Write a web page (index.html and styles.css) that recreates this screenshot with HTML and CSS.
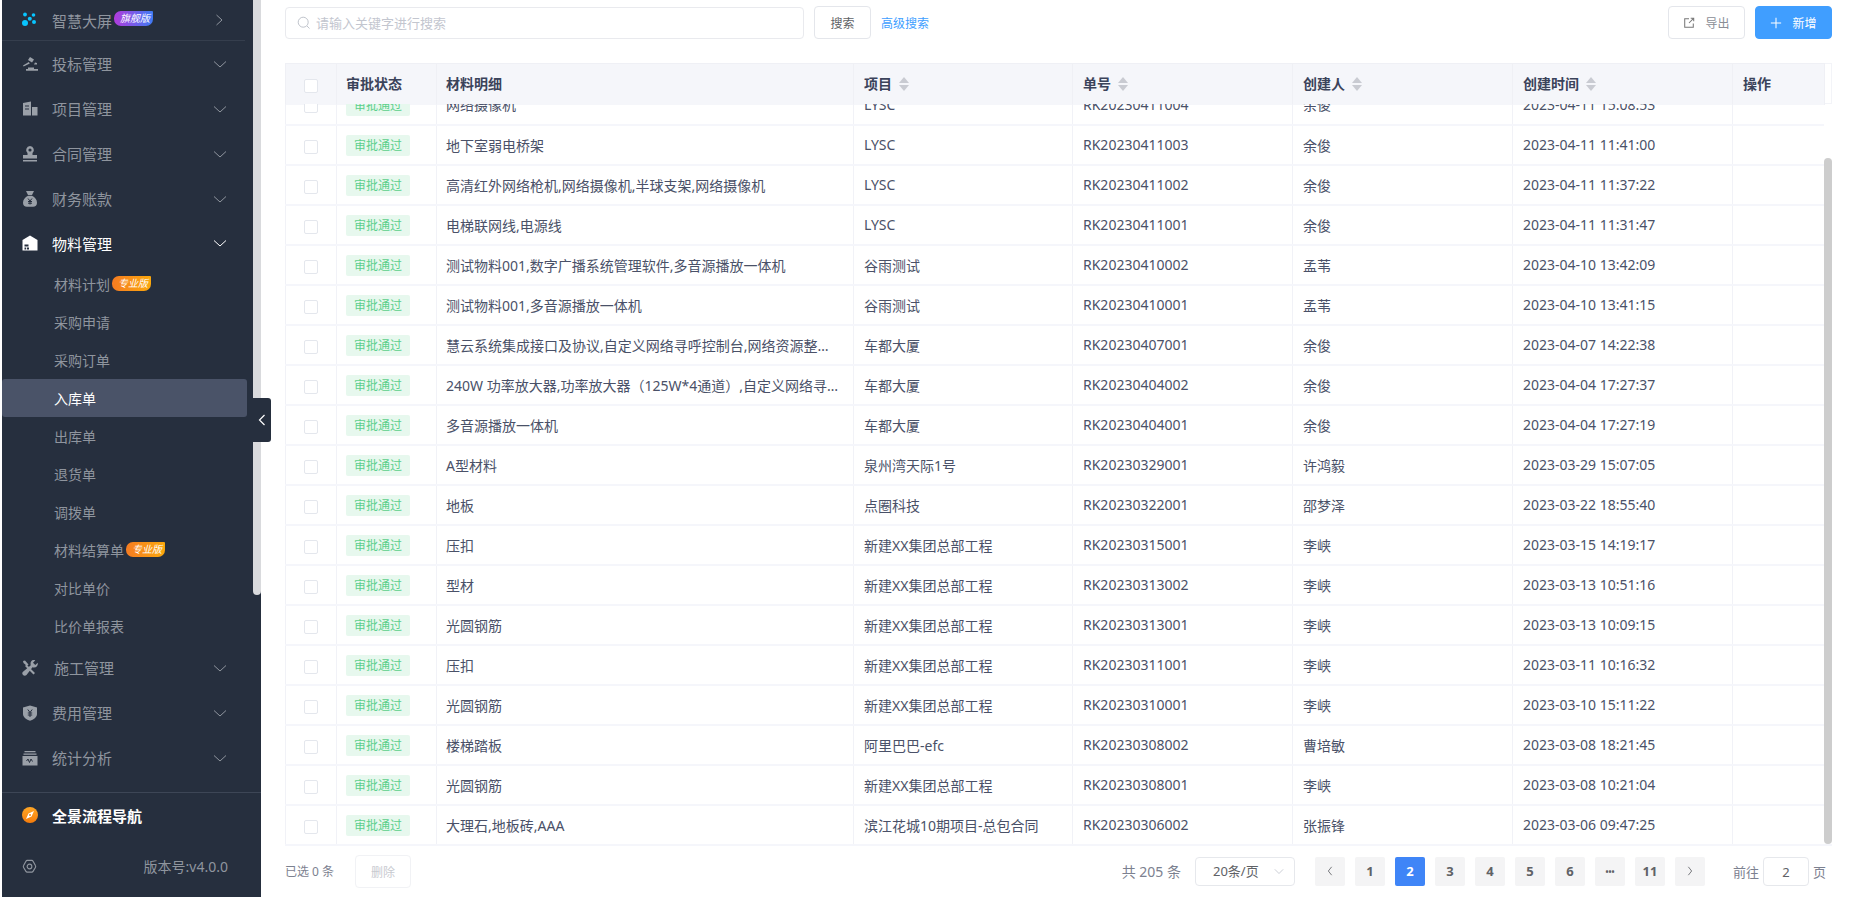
FILE: index.html
```html
<!DOCTYPE html>
<html lang="zh-CN">
<head>
<meta charset="utf-8">
<title>入库单</title>
<link rel="stylesheet" href="styles.css">
</head>
<body>
<div class="app">
  <aside class="sidebar">
    <div class="side-scroll">
      <nav class="menu">
        <div class="menu-item first">
          <svg class="ico" viewBox="0 0 16 16"><circle cx="3" cy="11" r="3" fill="#08c5ff"/><circle cx="3" cy="2.500" r="1.900" fill="#08c5ff"/><circle cx="7.800" cy="6.800" r="2" fill="#08c5ff"/><circle cx="11.500" cy="3" r="1.800" fill="#08c5ff"/><circle cx="12" cy="10" r="2" fill="#08c5ff"/></svg>
          <span>智慧大屏</span><em class="badge flagship">旗舰版</em>
          <svg class="chev" viewBox="0 0 12 12"><path d="M3.500 1 9 6 3.500 11"/></svg>
        </div>
        <div class="menu-item">
          <svg class="ico" viewBox="0 0 16 16"><path d="M8 1l4 2.500-2 3-4-2.500zM6.800 6 1 9.500l.6 1L7.800 7.500zM6 11.500h6V13H16v1.800H4V13h2zM13 6.500l2 .5v1.500h-3z" fill="#9aa0a8"/></svg>
          <span>投标管理</span>
          <svg class="chev" viewBox="0 0 12 12"><path d="M0 3.500 6 9l6-5.500"/></svg>
        </div>
        <div class="menu-item">
          <svg class="ico" viewBox="0 0 16 16"><path d="M1 2l8-1.500v14H1zM10 6h5.500v8.500H10z" fill="#9aa0a8"/><path d="M3 5h4M3 8h4" stroke="#262f3e" stroke-width="1"/></svg>
          <span>项目管理</span>
          <svg class="chev" viewBox="0 0 12 12"><path d="M0 3.500 6 9l6-5.500"/></svg>
        </div>
        <div class="menu-item">
          <svg class="ico" viewBox="0 0 16 16"><path d="M8 0a4 4 0 0 1 2.500 7v2H15v3.500H1V9h4.500V7A4 4 0 0 1 8 0zM1 14h14v1.500H1z" fill="#9aa0a8"/><circle cx="8" cy="4" r="1.600" fill="#262f3e"/></svg>
          <span>合同管理</span>
          <svg class="chev" viewBox="0 0 12 12"><path d="M0 3.500 6 9l6-5.500"/></svg>
        </div>
        <div class="menu-item">
          <svg class="ico" viewBox="0 0 16 16"><path d="M4 0h8l-2 4H6zM6 4.800h4c3 1.500 5 4 5 7 0 2.500-1.500 4-4 4H5c-2.500 0-4-1.500-4-4 0-3 2-5.500 5-7z" fill="#9aa0a8"/><path d="M6 7.500 8 10l2-2.500M8 10v3.500M6 10.500h4M6 12.200h4" stroke="#262f3e" fill="none"/></svg>
          <span>财务账款</span>
          <svg class="chev" viewBox="0 0 12 12"><path d="M0 3.500 6 9l6-5.500"/></svg>
        </div>
        <div class="menu-item open">
          <svg class="ico" viewBox="0 0 16 16"><path d="M8 .5 15.500 5v10.500H.5V5z" fill="#fff"/><path d="M2.500 9.500h4v2h-4zM2.500 12.500h1.700v2H2.500zM5 12.500h2v2H5z" fill="#262f3e"/></svg>
          <span>物料管理</span>
          <svg class="chev" viewBox="0 0 12 12"><path d="M0 3.500 6 9l6-5.500"/></svg>
        </div>
        <div class="sub-item"><span>材料计划</span><em class="badge pro">专业版</em></div>
        <div class="sub-item"><span>采购申请</span></div>
        <div class="sub-item"><span>采购订单</span></div>
        <div class="sub-item active"><span>入库单</span></div>
        <div class="sub-item"><span>出库单</span></div>
        <div class="sub-item"><span>退货单</span></div>
        <div class="sub-item"><span>调拨单</span></div>
        <div class="sub-item"><span>材料结算单</span><em class="badge pro">专业版</em></div>
        <div class="sub-item"><span>对比单价</span></div>
        <div class="sub-item"><span>比价单报表</span></div>
        <div class="menu-item wide">
          <svg class="ico" viewBox="0 0 16 16"><path d="M1 1 3 .5 6.500 4.500 5 6 1.500 3zM4.500 4.500l8.500 8.500-1.500 1.500L3 6z" fill="#9aa0a8"/><path d="M11.500 0c.8 0 1.300.1 1.800.3L11 2.700 13.300 5l2.400-2.300c.5 2-.5 4.800-3.700 4.800-.6 0-1 0-1.500-.2L4.500 15c-1 1-2.500 1-3.500 0s-1-2.300 0-3.300l7.800-6.500C8 3 9 0 11.500 0z" fill="#9aa0a8"/></svg>
          <span>施工管理</span>
          <svg class="chev" viewBox="0 0 12 12"><path d="M0 3.500 6 9l6-5.500"/></svg>
        </div>
        <div class="menu-item">
          <svg class="ico" viewBox="0 0 16 16"><path d="M8 .5 15 2.500V9c0 3.500-3.500 5.500-7 6.800C4.500 14.500 1 12.500 1 9V2.500z" fill="#9aa0a8"/><path d="M5.800 4.500 8 7.500l2.200-3M8 7.500V12M5.800 8h4.400M5.800 10h4.400" stroke="#262f3e" fill="none"/></svg>
          <span>费用管理</span>
          <svg class="chev" viewBox="0 0 12 12"><path d="M0 3.500 6 9l6-5.500"/></svg>
        </div>
        <div class="menu-item">
          <svg class="ico" viewBox="0 0 16 16"><path d="M2.500 1h11v1.300h-11zM1.500 3.500h13v1.300h-13zM.5 6h15v9.500H.5z" fill="#9aa0a8"/><path d="M4.500 11 6 9l1.500 3.500L9 9l1.500 2.500" stroke="#262f3e" fill="none"/></svg>
          <span>统计分析</span>
          <svg class="chev" viewBox="0 0 12 12"><path d="M0 3.500 6 9l6-5.500"/></svg>
        </div>
      </nav>
      <div class="side-bar-track"><div class="side-bar-thumb"></div></div>
    </div>
    <div class="side-nav-row">
      <svg class="ico" viewBox="0 0 16 16"><defs><linearGradient id="og" x1="0" y1="0" x2="0" y2="1"><stop offset="0" stop-color="#ffa726"/><stop offset="1" stop-color="#f57c0c"/></linearGradient></defs><circle cx="8" cy="8" r="8" fill="url(#og)"/><path d="M12 4 9.500 9.500 4 12l2.500-5.500z" fill="#fff"/><circle cx="8" cy="8" r="1" fill="#f58a12"/></svg>
      <span>全景流程导航</span>
    </div>
    <div class="side-foot">
      <svg class="gear" viewBox="0 0 16 16"><path d="M5.500 1.500h5a1.500 1.500 0 0 1 1.300.8l2.500 4.700a2 2 0 0 1 0 2l-2.500 4.200a1.500 1.500 0 0 1-1.300.8h-5a1.500 1.500 0 0 1-1.300-.8L1.700 9a2 2 0 0 1 0-2l2.500-4.700a1.500 1.500 0 0 1 1.300-.8z"/><circle cx="8" cy="8" r="2.500"/></svg>
      <span>版本号:v4.0.0</span>
    </div>
  </aside>
  <div class="collapse-handle"><svg viewBox="0 0 8 12"><path d="M6.500 1 1.500 6l5 5"/></svg></div>

  <main class="main">
    <div class="toolbar">
      <div class="search-box">
        <svg viewBox="0 0 14 14"><circle cx="6.200" cy="6.200" r="5"/><path d="M10 10l2.500 2.500"/></svg>
        <span>请输入关键字进行搜索</span>
      </div>
      <button class="btn btn-search">搜索</button>
      <a class="adv-link">高级搜索</a>
      <div class="toolbar-right">
        <button class="btn btn-tool">
          <svg viewBox="0 0 14 14"><path d="M7 2H2v10h10V7.500M9 1.500h3.500V5M12.300 1.700 7 7"/></svg>导出
        </button>
        <button class="btn btn-primary">
          <svg viewBox="0 0 14 14"><path d="M7 1v12M1 7h12"/></svg>新增
        </button>
      </div>
    </div>

    <div class="table-wrap">
      <div class="table-head-row">
        <table class="grid head">
          <colgroup><col class="c1"><col class="c2"><col class="c3"><col class="c4"><col class="c5"><col class="c5"><col class="c5"><col class="c8"></colgroup>
          <thead>
            <tr>
              <th><i class="check"></i></th>
              <th class="tight">审批状态</th>
              <th class="tight">材料明细</th>
              <th>项目<i class="sort"></i></th>
              <th>单号<i class="sort"></i></th>
              <th>创建人<i class="sort"></i></th>
              <th>创建时间<i class="sort"></i></th>
              <th>操作</th>
            </tr>
          </thead>
        </table>
        <div class="gutter"></div>
      </div>
      <div class="table-body-row">
        <div class="table-clip">
          <table class="grid body">
            <colgroup><col class="c1"><col class="c2"><col class="c3"><col class="c4"><col class="c5"><col class="c5"><col class="c5"><col class="c8"></colgroup>
            <tbody>
              <tr><td><i class="check"></i></td><td class="tight"><b class="tag">审批通过</b></td><td class="tight">网络摄像机</td><td>LYSC</td><td>RK20230411004</td><td>余俊</td><td>2023-04-11 15:08:53</td><td></td></tr>
              <tr><td><i class="check"></i></td><td class="tight"><b class="tag">审批通过</b></td><td class="tight">地下室弱电桥架</td><td>LYSC</td><td>RK20230411003</td><td>余俊</td><td>2023-04-11 11:41:00</td><td></td></tr>
              <tr><td><i class="check"></i></td><td class="tight"><b class="tag">审批通过</b></td><td class="tight">高清红外网络枪机,网络摄像机,半球支架,网络摄像机</td><td>LYSC</td><td>RK20230411002</td><td>余俊</td><td>2023-04-11 11:37:22</td><td></td></tr>
              <tr><td><i class="check"></i></td><td class="tight"><b class="tag">审批通过</b></td><td class="tight">电梯联网线,电源线</td><td>LYSC</td><td>RK20230411001</td><td>余俊</td><td>2023-04-11 11:31:47</td><td></td></tr>
              <tr><td><i class="check"></i></td><td class="tight"><b class="tag">审批通过</b></td><td class="tight">测试物料001,数字广播系统管理软件,多音源播放一体机</td><td>谷雨测试</td><td>RK20230410002</td><td>孟苇</td><td>2023-04-10 13:42:09</td><td></td></tr>
              <tr><td><i class="check"></i></td><td class="tight"><b class="tag">审批通过</b></td><td class="tight">测试物料001,多音源播放一体机</td><td>谷雨测试</td><td>RK20230410001</td><td>孟苇</td><td>2023-04-10 13:41:15</td><td></td></tr>
              <tr><td><i class="check"></i></td><td class="tight"><b class="tag">审批通过</b></td><td class="tight">慧云系统集成接口及协议,自定义网络寻呼控制台,网络资源整合模块,多音源</td><td>车都大厦</td><td>RK20230407001</td><td>余俊</td><td>2023-04-07 14:22:38</td><td></td></tr>
              <tr><td><i class="check"></i></td><td class="tight"><b class="tag">审批通过</b></td><td class="tight">240W 功率放大器,功率放大器（125W*4通道）,自定义网络寻呼控制台,多音源</td><td>车都大厦</td><td>RK20230404002</td><td>余俊</td><td>2023-04-04 17:27:37</td><td></td></tr>
              <tr><td><i class="check"></i></td><td class="tight"><b class="tag">审批通过</b></td><td class="tight">多音源播放一体机</td><td>车都大厦</td><td>RK20230404001</td><td>余俊</td><td>2023-04-04 17:27:19</td><td></td></tr>
              <tr><td><i class="check"></i></td><td class="tight"><b class="tag">审批通过</b></td><td class="tight">A型材料</td><td>泉州湾天际1号</td><td>RK20230329001</td><td>许鸿毅</td><td>2023-03-29 15:07:05</td><td></td></tr>
              <tr><td><i class="check"></i></td><td class="tight"><b class="tag">审批通过</b></td><td class="tight">地板</td><td>点圈科技</td><td>RK20230322001</td><td>邵梦泽</td><td>2023-03-22 18:55:40</td><td></td></tr>
              <tr><td><i class="check"></i></td><td class="tight"><b class="tag">审批通过</b></td><td class="tight">压扣</td><td>新建XX集团总部工程</td><td>RK20230315001</td><td>李峡</td><td>2023-03-15 14:19:17</td><td></td></tr>
              <tr><td><i class="check"></i></td><td class="tight"><b class="tag">审批通过</b></td><td class="tight">型材</td><td>新建XX集团总部工程</td><td>RK20230313002</td><td>李峡</td><td>2023-03-13 10:51:16</td><td></td></tr>
              <tr><td><i class="check"></i></td><td class="tight"><b class="tag">审批通过</b></td><td class="tight">光圆钢筋</td><td>新建XX集团总部工程</td><td>RK20230313001</td><td>李峡</td><td>2023-03-13 10:09:15</td><td></td></tr>
              <tr><td><i class="check"></i></td><td class="tight"><b class="tag">审批通过</b></td><td class="tight">压扣</td><td>新建XX集团总部工程</td><td>RK20230311001</td><td>李峡</td><td>2023-03-11 10:16:32</td><td></td></tr>
              <tr><td><i class="check"></i></td><td class="tight"><b class="tag">审批通过</b></td><td class="tight">光圆钢筋</td><td>新建XX集团总部工程</td><td>RK20230310001</td><td>李峡</td><td>2023-03-10 15:11:22</td><td></td></tr>
              <tr><td><i class="check"></i></td><td class="tight"><b class="tag">审批通过</b></td><td class="tight">楼梯踏板</td><td>阿里巴巴-efc</td><td>RK20230308002</td><td>曹培敏</td><td>2023-03-08 18:21:45</td><td></td></tr>
              <tr><td><i class="check"></i></td><td class="tight"><b class="tag">审批通过</b></td><td class="tight">光圆钢筋</td><td>新建XX集团总部工程</td><td>RK20230308001</td><td>李峡</td><td>2023-03-08 10:21:04</td><td></td></tr>
              <tr><td><i class="check"></i></td><td class="tight"><b class="tag">审批通过</b></td><td class="tight">大理石,地板砖,AAA</td><td>滨江花城10期项目-总包合同</td><td>RK20230306002</td><td>张振锋</td><td>2023-03-06 09:47:25</td><td></td></tr>
            </tbody>
          </table>
        </div>
        <div class="table-scroll"><div class="table-thumb"></div></div>
      </div>
    </div>

    <div class="footer">
      <span class="selected">已选 0 条</span>
      <button class="btn btn-del">删除</button>
      <div class="pager">
        <span class="total">共 205 条</span>
        <div class="size-select"><span>20条/页</span><svg viewBox="0 0 12 12"><path d="M1 4l5 5 5-5"/></svg></div>
        <div class="pages">
          <button class="pg"><svg viewBox="0 0 8 12"><path d="M6 1 2 6l4 5"/></svg></button>
          <button class="pg">1</button>
          <button class="pg on">2</button>
          <button class="pg">3</button>
          <button class="pg">4</button>
          <button class="pg">5</button>
          <button class="pg">6</button>
          <button class="pg dots">•••</button>
          <button class="pg">11</button>
          <button class="pg"><svg viewBox="0 0 8 12"><path d="M2 1l4 5-4 5"/></svg></button>
        </div>
        <div class="jump"><span>前往</span><span class="jump-input">2</span><span>页</span></div>
      </div>
    </div>
  </main>
</div>
</body>
</html>
```
FILE: styles.css
```css
* { box-sizing: border-box; }
html, body { margin: 0; padding: 0; height: 100%; background: #fff; overflow: hidden; }
body { font-family: "Noto Sans", "Noto Sans CJK SC", sans-serif; font-size: 14px; color: #4a5168; }
.app { display: flex; width: 1855px; height: 897px; padding-left: 2px; position: relative; }

/* sidebar */
.sidebar { width: 259px; flex: none; background: #262f3e; display: flex; flex-direction: column; color: #8f959e; }
.side-scroll { height: 793px; flex: none; display: flex; border-bottom: 1px solid #3d4656; }
.menu { width: 251px; flex: none; }
.side-bar-track { width: 8px; flex: none; }
.side-bar-thumb { height: 595px; background: #d9dadd; border-radius: 0 0 4px 4px; }
.menu-item { height: 45px; display: flex; align-items: center; padding-left: 20px; font-size: 15px; }
.menu-item .ico { margin-right: 14px; }
.menu-item.first { height: 41px; border-bottom: 1px solid #353e4d; width: 243px; padding-right: 0; }
.menu-item.open { color: #fff; height: 44px; }
.menu-item.open .chev { stroke: #fff; }
.menu-item.wide .ico { margin-right: 16px; }
.ico { width: 16px; height: 16px; flex: none; }
.chev { width: 12px; height: 12px; flex: none; fill: none; stroke: #8f959e; stroke-width: 1; margin-left: auto; margin-right: 27px; }
.first .chev { margin-right: 20px; }
.sub-item { height: 38px; display: flex; align-items: center; padding-left: 52px; font-size: 14px; width: 245px; border-radius: 3px; }
.sub-item.active { background: #4a5368; color: #fff; }
.badge { font-size: 10px; font-style: italic; color: #fff; height: 15px; line-height: 15px; padding: 0 6px; width: 39px; flex: none; white-space: nowrap; border-radius: 7px 1px 7px 7px; margin-left: 2px; }
.flagship { background: linear-gradient(90deg, #b23bdc, #3e7bf5); margin-top: -3px; }
.pro { background: linear-gradient(90deg, #f57c22, #fba80c); margin-top: -2px; }
.side-nav-row { height: 44px; display: flex; align-items: center; padding-left: 20px; font-size: 15px; font-weight: 700; color: #fff; }
.side-nav-row .ico { margin-right: 14px; }
.side-foot { height: 60px; display: flex; align-items: center; justify-content: space-between; padding: 0 33px 2px 20px; font-size: 14px; }
.gear { width: 15px; height: 15px; fill: none; stroke: #8f959e; stroke-width: 1.200; }
.collapse-handle { position: absolute; left: 253px; top: 398px; width: 18px; height: 44px; background: #262f3e; border-radius: 0 3px 3px 0; display: flex; align-items: center; justify-content: center; }
.collapse-handle svg { width: 8px; height: 12px; fill: none; stroke: #fff; stroke-width: 1.200; }

/* main */
.main { flex: 1; min-width: 0; display: flex; flex-direction: column; padding: 6px 23px 0 24px; }
.toolbar { display: flex; align-items: center; height: 33px; flex: none; }
.search-box { width: 519px; height: 32px; border: 1px solid #e9eaee; border-radius: 4px; display: flex; align-items: center; padding-left: 11px; font-size: 13px; color: #c3c6cf; }
.search-box svg { width: 14px; height: 14px; fill: none; stroke: #c0c4cc; stroke-width: 1; margin-right: 5px; }
.btn { font-family: inherit; background: #fff; border: 1px solid #e4e6eb; border-radius: 4px; font-size: 12px; color: #606266; height: 33px; padding: 0; display: inline-flex; align-items: center; justify-content: center; }
.btn-search { width: 57px; margin-left: 10px; }
.adv-link { font-size: 12px; color: #409eff; margin-left: 10px; }
.toolbar-right { margin-left: auto; display: flex; gap: 10px; }
.btn-tool { width: 77px; color: #8a8e96; }
.btn-tool svg { width: 12px; height: 12px; fill: none; stroke: #777; stroke-width: 1.200; margin-right: 10px; }
.btn-primary { width: 77px; background: #409eff; border-color: #409eff; color: #fff; }
.btn-primary svg { width: 12px; height: 12px; fill: none; stroke: #fff; stroke-width: 1.200; margin-right: 10px; }

.table-wrap { margin-top: 24px; flex: none; width: 1547px; }
.table-head-row { display: flex; height: 41px; }
.table-body-row { display: flex; height: 742px; }
.table-clip { width: 1539px; display: flex; flex-direction: column; justify-content: flex-end; overflow: hidden; flex: none; }
.gutter { flex: 1; border: 1px solid #f3f4f8; border-left: 0; background: #fff; }
.table-scroll { flex: 1; padding-top: 54px; border-bottom: 2px solid #f5f6fb; }
.table-thumb { height: 100%; background: #cdcdcd; border-radius: 4px; }

.grid { border-collapse: collapse; table-layout: fixed; width: 1539px; flex: none; }
.c1 { width: 51px; } .c2 { width: 100px; } .c3 { width: 417px; } .c4 { width: 219px; } .c5 { width: 220px; } .c8 { width: 92px; }
.grid th { height: 41px; background: #f5f6fa; text-align: left; font-weight: 700; color: #3b435a; font-size: 14px; padding: 0 10px 2px; border: 1px solid #eff0f5; border-bottom: 0; white-space: nowrap; }
.grid th:first-child, .grid td:first-child { text-align: center; padding: 0; }
.grid td { height: 40px; padding: 0 10px 1px; border-right: 1px solid #f1f2f7; border-bottom: 2px solid #f5f6fb; white-space: nowrap; overflow: hidden; text-overflow: ellipsis; }
.grid th.tight, .grid td.tight { padding-left: 9px; padding-right: 13px; }
.grid td:first-child { border-left: 1px solid #f1f2f7; }
.check { display: inline-block; width: 14px; height: 14px; border: 1px solid #e4e7ed; border-radius: 2px; background: #fff; vertical-align: middle; }
.tag { display: block; width: 64px; height: 21px; line-height: 21px; margin-top: 2px; text-align: center; background: #e7f8ee; color: #5ccf8b; font-size: 12px; font-weight: 400; border-radius: 2px; }
.sort { display: inline-block; width: 10px; height: 14px; margin-left: 7px; vertical-align: -2px; position: relative; }
.sort::before, .sort::after { content: ""; position: absolute; left: 0; border-left: 5px solid transparent; border-right: 5px solid transparent; }
.sort::before { top: 0; border-bottom: 6px solid #c9cbd2; }
.sort::after { bottom: 0; border-top: 6px solid #c9cbd2; }

/* footer */
.footer { display: flex; align-items: center; height: 33px; margin-top: 9px; flex: none; width: 1547px; }
.selected { font-size: 12px; color: #7c8190; padding-bottom: 2px; }
.btn-del { width: 56px; margin-left: 21px; border-color: #f1f2f5; color: #c8cad0; }
.pager { margin-left: auto; display: flex; align-items: center; font-size: 13px; color: #7c8190; }
.total { margin-right: 14px; font-size: 14px; padding-bottom: 2px; }
.size-select { width: 100px; height: 29px; border: 1px solid #e6e8ec; border-radius: 4px; display: flex; align-items: center; justify-content: space-between; padding: 0 10px 2px 17px; color: #606266; }
.size-select svg { width: 10px; height: 10px; fill: none; stroke: #c0c4cc; }
.pages { display: flex; gap: 10px; margin-left: 20px; }
.pg { font-family: inherit; width: 30px; height: 29px; border: 0; background: #f4f4f5; border-radius: 2px; color: #606266; font-size: 13px; font-weight: 700; padding: 0 0 2px; display: flex; align-items: center; justify-content: center; }
.pg.dots { font-size: 8px; letter-spacing: 0; padding: 0; }
.pg svg { width: 8px; height: 10px; fill: none; stroke: #606266; }
.pg.on { background: #3f85f7; color: #fff; }
.jump { display: flex; align-items: center; margin-left: 28px; margin-right: 6px; gap: 4px; padding-bottom: 0; }
.jump-input { width: 46px; height: 29px; border: 1px solid #e6e8ec; border-radius: 4px; display: flex; align-items: center; justify-content: center; color: #606266; }
```
